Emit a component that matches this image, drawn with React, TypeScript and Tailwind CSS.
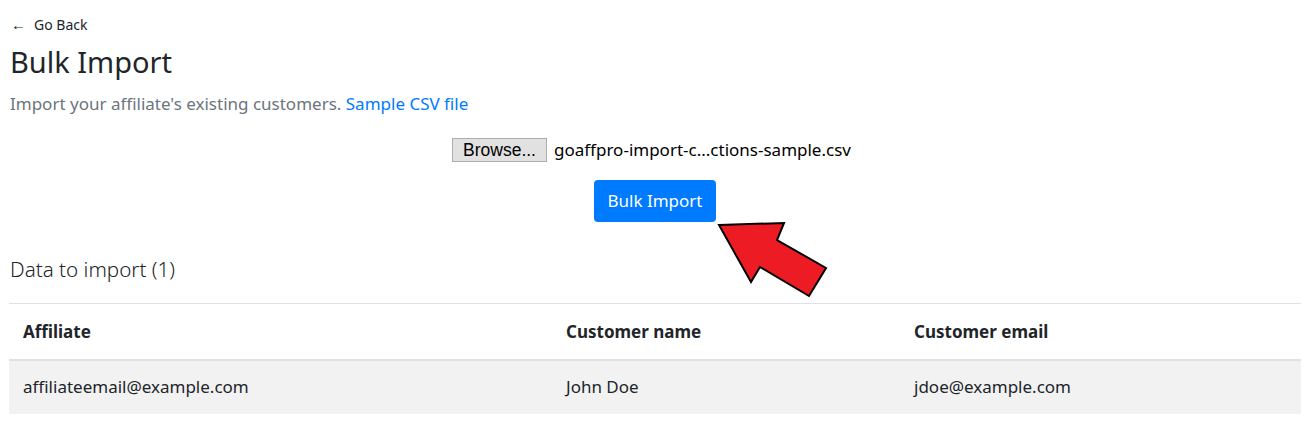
import React from "react";

export default function App() {
  return (
    <div className="w-[1308px] h-[422px] bg-white overflow-hidden text-[#212529]" style={{ fontFamily: '"Noto Sans", "Open Sans", sans-serif' }}>
      <div className="pl-[9px] pr-[7px]">
        <div className="h-[14px]" />
        <div className="flex items-center h-[20px] text-[14px] text-[#212529]">
          <span className="ml-[2px] w-[23px] text-[15px] leading-none">←</span>
          <span>Go Back</span>
        </div>
        <h1 className="mt-[9px] h-[38px] leading-[38px] text-[29px] font-normal pl-[1px]">Bulk Import</h1>
        <p className="mt-[11px] h-[24px] leading-[24px] text-[17px] text-[#6c757d] pl-[1px]">
          Import your affiliate's existing customers.{" "}
          <a className="text-[#007bff]">Sample CSV file</a>
        </p>
        <div className="mt-[21px] flex justify-center items-center h-[26px] pr-[7px]">
          <div className="flex items-center">
            <span className="h-[24px] w-[95px] flex items-center justify-center bg-[#e1e1e1] border border-[#adadad] text-[17.5px] text-black" style={{ fontFamily: '"Liberation Sans", sans-serif' }}>
              Browse...
            </span>
            <span className="ml-[7px] text-[17px] text-black">goaffpro-import-c...ctions-sample.csv</span>
          </div>
        </div>
        <div className="mt-[17px] flex justify-center relative">
          <button className="w-[122px] h-[42px] rounded-[4px] bg-[#007bff] text-white text-[17px]">Bulk Import</button>
          <svg className="absolute left-[700px] top-[32px]" width="130" height="90" viewBox="709 212 130 90">
            <polygon
              points="719,225 784,223 777,240 826,268 809,296 760,267 751,282"
              fill="#ed1c24"
              stroke="#000"
              strokeWidth="2"
              strokeLinejoin="miter"
            />
          </svg>
        </div>
        <h5 className="mt-[33px] h-[28px] leading-[28px] text-[20.6px] font-light pl-[1px]">Data to import (1)</h5>
        <table className="mt-[20px] w-[1292px] text-[17px] border-collapse">
          <thead>
            <tr className="border-t border-[#dee2e6] border-b-2 border-b-[#dee2e6]">
              <th className="w-[545px] h-[56px] pl-[14px] pr-[12px] text-left font-bold">Affiliate</th>
              <th className="w-[348px] px-[12px] text-left font-bold">Customer name</th>
              <th className="px-[12px] text-left font-bold">Customer email</th>
            </tr>
          </thead>
          <tbody>
            <tr className="bg-[#f2f2f2]">
              <td className="h-[54px] pl-[14px] pr-[12px]">affiliateemail@example.com</td>
              <td className="px-[12px]">John Doe</td>
              <td className="px-[12px]">jdoe@example.com</td>
            </tr>
          </tbody>
        </table>
      </div>
    </div>
  );
}
